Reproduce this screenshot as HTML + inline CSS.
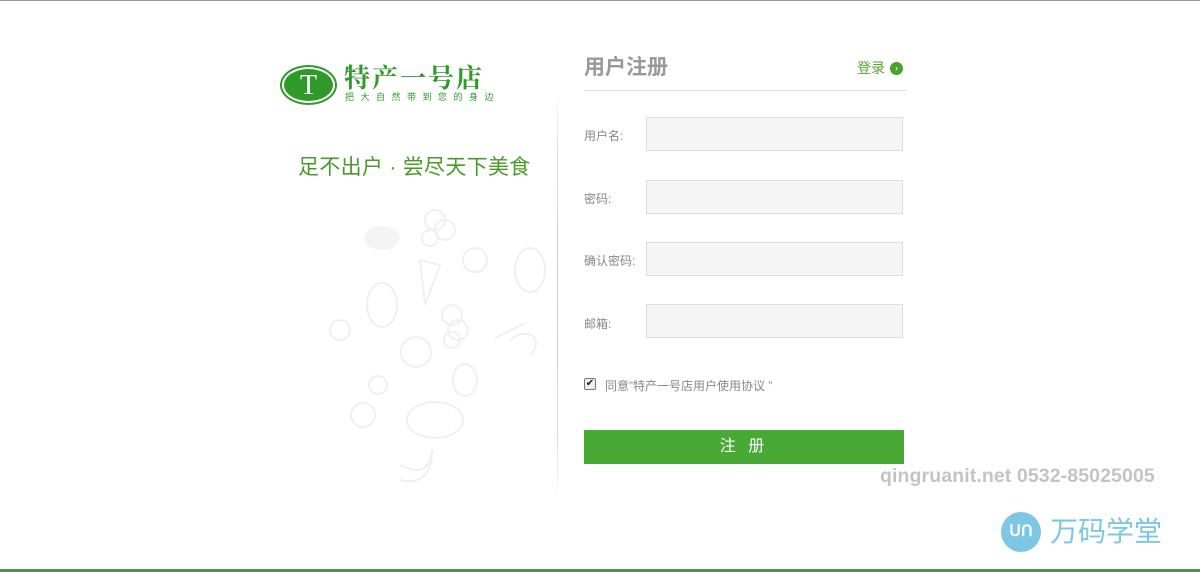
<!DOCTYPE html>
<html><head><meta charset="utf-8"><style>
*{margin:0;padding:0;box-sizing:border-box}
body{width:1200px;height:572px;background:#fff;position:relative;overflow:hidden;font-family:"Liberation Sans","Noto Sans CJK SC",sans-serif}
.a{position:absolute}
.lbl{position:absolute;left:584px;font-size:12px;color:#888}
.inp{position:absolute;left:646px;width:257px;height:34px;background:#f5f5f5;border:1px solid #ddd}
</style></head><body>
<div class="a" style="left:0;top:0;width:1200px;height:1px;background:#999"></div>
<div class="a" style="left:0;top:569px;width:1200px;height:3px;background:#5a8a5a"></div>
<div class="a" style="left:280px;top:65px;width:57px;height:40px;border-radius:50%;border:2px solid #2f9a2a;padding:2px"><div style="width:100%;height:100%;border-radius:50%;background:#2f9a2a;color:#fff;font-family:'Liberation Serif',serif;font-size:28px;text-align:center;line-height:33px">T</div></div>
<div class="a" style="left:344px;top:64px;font-family:'Liberation Serif','Noto Serif CJK SC',serif;font-size:26px;font-weight:bold;color:#2f9a2a;letter-spacing:2px;line-height:30px">特产一号店</div>
<div class="a" style="left:345px;top:92px;font-size:9px;color:#2f9a2a;letter-spacing:6.5px;line-height:11px">把大自然带到您的身边</div>
<div class="a" style="left:298px;top:155px;font-size:21px;color:#4a9a2a;line-height:26px;letter-spacing:0.3px">足不出户 · 尝尽天下美食</div>
<svg class="a" style="left:320px;top:190px" width="240" height="310" fill="none" stroke="#f0f0f0" stroke-width="2">
<ellipse cx="62" cy="48" rx="18" ry="12" fill="#f4f4f4" stroke="none"/>
<circle cx="115" cy="30" r="10"/><circle cx="125" cy="40" r="10"/><circle cx="110" cy="48" r="8"/>
<path d="M100 70 L120 75 L105 115 Z"/>
<ellipse cx="210" cy="80" rx="15" ry="22"/>
<circle cx="155" cy="70" r="12"/>
<ellipse cx="62" cy="115" rx="15" ry="22"/>
<circle cx="20" cy="140" r="10"/>
<circle cx="132" cy="125" r="10"/><circle cx="138" cy="140" r="10"/><circle cx="132" cy="150" r="8"/>
<path d="M175 148 L205 133 M190 150 C210 135 225 150 210 165"/>
<circle cx="96" cy="162" r="15"/>
<circle cx="58" cy="195" r="9"/>
<ellipse cx="145" cy="190" rx="12" ry="16"/>
<circle cx="43" cy="225" r="12"/>
<ellipse cx="115" cy="230" rx="28" ry="18"/>
<path d="M80 275 C100 285 110 280 112 260 C112 285 100 295 80 290"/>
</svg>
<div class="a" style="left:557px;top:90px;width:1px;height:410px;background:linear-gradient(#fff,#ddd 15%,#ccc 50%,#ddd 85%,#fff)"></div>
<div class="a" style="left:584px;top:55px;font-size:21px;font-weight:bold;color:#999;line-height:26px">用户注册</div>
<div class="a" style="left:857px;top:60px;font-size:14px;color:#5aa532;line-height:17px">登录</div>
<div class="a" style="left:890px;top:62px;width:13px;height:13px;border-radius:50%;background:#4aa22a;color:#fff;font-size:9px;line-height:13px;text-align:center">›</div>
<div class="a" style="left:584px;top:90px;width:322px;height:1px;background:#ddd"></div>
<div class="lbl" style="top:127px">用户名:</div><div class="inp" style="top:117px"></div>
<div class="lbl" style="top:190px">密码:</div><div class="inp" style="top:180px"></div>
<div class="lbl" style="top:252px">确认密码:</div><div class="inp" style="top:242px"></div>
<div class="lbl" style="top:315px">邮箱:</div><div class="inp" style="top:304px"></div>
<div class="a" style="left:584px;top:378px;width:12px;height:12px;border:1px solid #777;border-radius:2px;background:#eee;font-size:10px;line-height:10px;text-align:center;color:#222">✔</div>
<div class="a" style="left:605px;top:377px;font-size:12px;color:#888">同意”特产一号店用户使用协议 ”</div>
<div class="a" style="left:584px;top:430px;width:320px;height:34px;background:#48a935;color:#fff;font-size:16px;line-height:34px;text-align:center;letter-spacing:4px">注 册</div>
<div class="a" style="left:880px;top:464px;font-size:19.5px;font-weight:bold;color:#c4c4c4;line-height:24px;letter-spacing:0.1px">qingruanit.net 0532-85025005</div>
<div class="a" style="left:1001px;top:512px;width:40px;height:40px;border-radius:50%;background:#7cc8e4;color:#fff;font-size:16px;font-weight:bold;text-align:center;line-height:40px">ᑌᑎ</div>
<div class="a" style="left:1050px;top:514px;font-size:28px;color:#7cc8e4;line-height:36px">万码学堂</div>
</body></html>
